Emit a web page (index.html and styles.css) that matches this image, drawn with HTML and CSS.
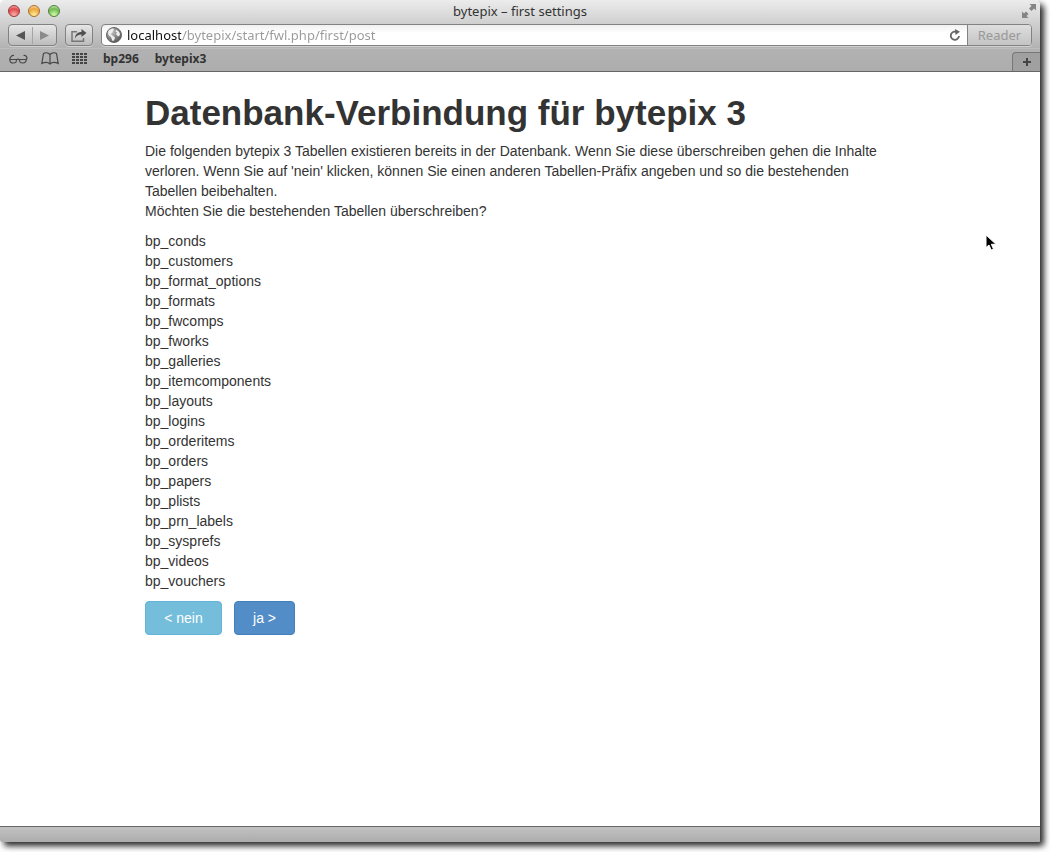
FILE: index.html
```html
<!DOCTYPE html>
<html lang="de">
<head>
    <meta charset="UTF-8">
    <meta name="viewport" content="width=device-width, initial-scale=1.0">
    <title>bytepix – first settings</title>
    <link rel="stylesheet" href="styles.css">
</head>
<body>
    <div class="window">
        <header class="chrome">
            <div class="titlebar">
                <div class="lights">
                    <button class="light red" aria-label="Schließen"></button>
                    <button class="light yellow" aria-label="Minimieren"></button>
                    <button class="light green" aria-label="Zoomen"></button>
                </div>
                <div class="title">bytepix – first settings</div>
                <button class="fullscreen" aria-label="Vollbild">
                    <svg width="14" height="14" viewBox="0 0 14 14" fill="#858585">
                        <path d="M7.500 0H14v6.500l-2-2L9.500 7 7 4.500 9.500 2z"/>
                        <path d="M6.500 14H0V7.500l2 2L4 7.500 6.500 10l-2 2z"/>
                    </svg>
                </button>
            </div>
            <div class="toolbar">
                <div class="nav">
                    <button aria-label="Zurück"><svg width="9" height="9" viewBox="0 0 9 9"><path d="M9 0v9L0 4.500z" fill="#555"/></svg></button>
                    <button aria-label="Vorwärts"><svg width="9" height="9" viewBox="0 0 9 9"><path d="M0 0v9l9-4.500z" fill="#8a8a8a"/></svg></button>
                </div>
                <button class="share" aria-label="Teilen">
                    <svg width="16" height="13" viewBox="0 0 16 13">
                        <path d="M6 2.700H1v9.500h11.500V9" fill="none" stroke="#777" stroke-width="1.500"/>
                        <path d="M4 9.500C4 5.500 6.500 3 10.500 3V0l5 4-5 4V5.500C7.500 5.500 5.500 6.500 4 9.500z" fill="#505050"/>
                    </svg>
                </button>
                <div class="address">
                    <svg class="globe" width="16" height="16" viewBox="0 0 16 16">
                        <defs>
                            <radialGradient id="sea" cx="35%" cy="30%" r="75%">
                                <stop offset="0" stop-color="#c4c4c4"/>
                                <stop offset="1" stop-color="#555"/>
                            </radialGradient>
                        </defs>
                        <circle cx="8" cy="8" r="7.500" fill="url(#sea)" stroke="#666"/>
                        <path d="M2 5c1-2 3-3.500 5-3.500l1 1-1 1.500-1 2-1.500 1L7 9l2 1.500-1 3-1.500.5-1.500-4-2.500-2zM10 3c2 .5 3.500 2 4 4l-1 2.500-2-1-1-1.500 1-1.500-1.500-1z" fill="#efefef"/>
                    </svg>
                    <input type="text" class="url" aria-label="Adresse" value="localhost/bytepix/start/fwl.php/first/post">
                    <button class="reload" aria-label="Neu laden">
                        <svg width="12" height="12" viewBox="0 0 12 12">
                            <path d="M8.500 3.500A4.100 4.100 0 1 0 10 7" fill="none" stroke="#666" stroke-width="1.800"/>
                            <path d="M6 0l5 2.700L6.500 6z" fill="#666"/>
                        </svg>
                    </button>
                    <button class="reader" disabled>Reader</button>
                </div>
            </div>
            <nav class="bookmarks">
                <a href="#" aria-label="Leseliste">
                    <svg width="19" height="10" viewBox="0 0 19 10" fill="none" stroke="#484848" stroke-width="1.200">
                        <path d="M.8 5.500h6.400c1 3-1 3.500-3 3.500S.8 8 .8 5.500zM10.800 5.500h6.400c0 2.500-1.400 3.500-3.400 3.500s-4-.5-3-3.500z"/>
                        <path d="M7.200 6c1-1 2.600-1 3.600 0M.8 5.500C1 3 3 1 5 1.500M17.200 5.500C19 3.500 17 1 14.500 1.500"/>
                    </svg>
                </a>
                <a href="#" aria-label="Lesezeichen">
                    <svg width="18" height="13" viewBox="0 0 18 13" fill="none" stroke="#484848" stroke-width="1.200">
                        <path d="M9 2.500C7 .5 4 .5 2.500 1.500L.8 11.500C4 10 7 10 9 12c2-2 5-2 8.200-.5L15.500 1.500C14 .5 11 .5 9 2.500zM9 2.500V12"/>
                    </svg>
                </a>
                <a href="#" aria-label="Top Sites">
                    <svg width="15" height="11" viewBox="0 0 15 11" stroke="#444" stroke-width="2" stroke-dasharray="3 1">
                        <path d="M0 1h15M0 4h15M0 7h15M0 10h15"/>
                    </svg>
                </a>
                <a href="#">bp296</a>
                <a href="#">bytepix3</a>
                <button class="newtab" aria-label="Neuer Tab">
                    <svg width="8" height="8" viewBox="0 0 8 8"><path d="M4 0v8M0 4h8" stroke="#444" stroke-width="2"/></svg>
                </button>
            </nav>
        </header>

        <main class="page">
            <div class="container">
                <h1>Datenbank-Verbindung für bytepix 3</h1>
                <p>Die folgenden bytepix 3 Tabellen existieren bereits in der Datenbank. Wenn Sie diese überschreiben gehen die Inhalte verloren. Wenn Sie auf 'nein' klicken, können Sie einen anderen Tabellen-Präfix angeben und so die bestehenden Tabellen beibehalten.<br>
                Möchten Sie die bestehenden Tabellen überschreiben?</p>
                <ul>
                    <li>bp_conds</li>
                    <li>bp_customers</li>
                    <li>bp_format_options</li>
                    <li>bp_formats</li>
                    <li>bp_fwcomps</li>
                    <li>bp_fworks</li>
                    <li>bp_galleries</li>
                    <li>bp_itemcomponents</li>
                    <li>bp_layouts</li>
                    <li>bp_logins</li>
                    <li>bp_orderitems</li>
                    <li>bp_orders</li>
                    <li>bp_papers</li>
                    <li>bp_plists</li>
                    <li>bp_prn_labels</li>
                    <li>bp_sysprefs</li>
                    <li>bp_videos</li>
                    <li>bp_vouchers</li>
                </ul>
                <div class="actions">
                    <button class="btn btn-info">&lt; nein</button>
                    <button class="btn btn-primary">ja &gt;</button>
                </div>
            </div>
        </main>

        <footer class="statusbar"></footer>

        <svg class="cursor" width="12" height="18" viewBox="0 0 12 18">
            <path d="M1 1v12.500l3-2.500 2.200 5 2.300-1-2.200-4.700H11z" fill="#000" stroke="#fff"/>
        </svg>
    </div>
</body>
</html>
```
FILE: styles.css
```css
* {
    box-sizing: border-box;
}
body {
    margin: 0;
    padding: 0 10px 10px 0;
    min-height: 100vh;
    display: flex;
    background-color: #fff;
    color: #333;
    font-family: "Liberation Sans", Arial, sans-serif;
    font-size: 14px;
    line-height: 20px;
}
button {
    font-family: inherit;
    padding: 0;
    border: none;
    background: none;
}
svg {
    display: block;
}
.window {
    position: relative;
    flex: 1;
    display: flex;
    flex-direction: column;
    background-color: #fff;
    border-radius: 5px 5px 2px 2px;
    box-shadow: 4px 4px 6px rgba(0, 0, 0, 0.85);
}

/* browser chrome */
.chrome {
    font-family: "Noto Sans", "Open Sans", sans-serif;
    background: linear-gradient(#ececec, #b2b2b2 48px, #adadad);
    border-bottom: 1px solid #666;
    border-radius: 5px 5px 0 0;
}
.titlebar {
    display: grid;
    grid-template-columns: 60px 1fr 60px;
    align-items: center;
    height: 24px;
    padding-bottom: 2px;
}
.lights {
    display: flex;
    gap: 8px;
    padding-left: 8px;
}
.light {
    width: 12px;
    height: 12px;
    flex: none;
    border: 1px solid #666;
    border-radius: 50%;
}
.red {
    background: radial-gradient(circle at 50% 90%, #ffb3ad, #e04a4c 60%, #f7cccc);
    border-color: #96393b;
}
.yellow {
    background: radial-gradient(circle at 50% 90%, #fff0a0, #eda43c 60%, #fbe8c8);
    border-color: #a0702c;
}
.green {
    background: radial-gradient(circle at 50% 90%, #d8ffb0, #71b951 60%, #dff5d4);
    border-color: #4f7f3a;
}
.title {
    text-align: center;
    font-size: 13px;
}
.fullscreen {
    justify-self: end;
    margin-right: 4px;
}
.toolbar {
    display: flex;
    gap: 8px;
    height: 24px;
    padding: 0 8px 2px;
}
.nav,
.share,
.address {
    border: 1px solid #828282;
    border-radius: 4px;
    box-shadow: 0 1px 0 rgba(255, 255, 255, 0.4);
}
.nav,
.share {
    background: linear-gradient(#e6e6e6, #bcbcbc);
}
.nav {
    display: flex;
    align-items: center;
    width: 49px;
}
.nav button {
    flex: 1;
    display: flex;
    justify-content: center;
}
.nav button + button {
    border-left: 1px solid #a5a5a5;
    padding: 4px 0;
}
.share {
    display: flex;
    align-items: center;
    justify-content: center;
    width: 28px;
}
.address {
    flex: 1;
    display: flex;
    align-items: center;
    background: linear-gradient(#f0f0f0, #fff 8px);
    overflow: hidden;
}
.globe {
    margin-left: 4px;
}
.url {
    flex: 1;
    min-width: 0;
    height: 20px;
    margin-left: 5px;
    padding: 0;
    border: none;
    outline: none;
    font-family: inherit;
    font-size: 13px;
    /* host dark, path grey */
    color: transparent;
    background: linear-gradient(to right, #111 54px, #999 54px);
    -webkit-background-clip: text;
    background-clip: text;
}
.reload {
    margin-right: 6px;
}
.reader {
    align-self: stretch;
    width: 64px;
    border-left: 1px solid #828282;
    background: linear-gradient(#dedede, #c4c4c4);
    color: #999;
    font-size: 13px;
}
.bookmarks {
    display: flex;
    align-items: center;
    height: 23px;
    padding: 0 0 2px 9px;
    font-size: 12px;
    font-weight: bold;
    box-shadow: inset 0 1px 0 #bdbdbd;
}
.bookmarks a {
    color: #333;
    text-decoration: none;
    margin-right: 16px;
}
.bookmarks a:nth-child(-n+2) {
    margin-right: 13px;
}
.newtab {
    align-self: flex-end;
    display: flex;
    align-items: center;
    justify-content: center;
    width: 28px;
    height: 19px;
    margin: 0 0 -2px auto;
    border: 1px solid #777;
    border-width: 1px 0 0 1px;
    border-radius: 4px 0 0 0;
    background-color: #a0a0a0;
}

/* page */
.page {
    flex: 1;
}
.container {
    max-width: 750px;
    margin: 0 auto;
    padding-top: 20px;
}
h1 {
    margin: 0 0 8px;
    font-size: 35px;
    line-height: 41px;
    font-weight: bold;
}
p {
    margin: 0 0 10px;
}
ul {
    list-style: none;
    margin: 0 0 10px;
    padding: 0;
}
.actions {
    display: flex;
    gap: 12px;
}
.btn {
    height: 34px;
    padding: 0 16px;
    border: 1px solid;
    border-radius: 4px;
    color: #fff;
    font-size: 14px;
    cursor: pointer;
}
.btn-info {
    min-width: 77px;
    background-color: #74bddb;
    border-color: #62b5d6;
}
.btn-primary {
    min-width: 61px;
    background-color: #528dc8;
    border-color: #4180c0;
}
.statusbar {
    height: 16px;
    background: linear-gradient(#c2c2c2, #acacac);
    border-top: 1px solid #666;
    border-radius: 0 0 2px 2px;
}
.cursor {
    position: absolute;
    top: 234px;
    right: 43px;
}
```
